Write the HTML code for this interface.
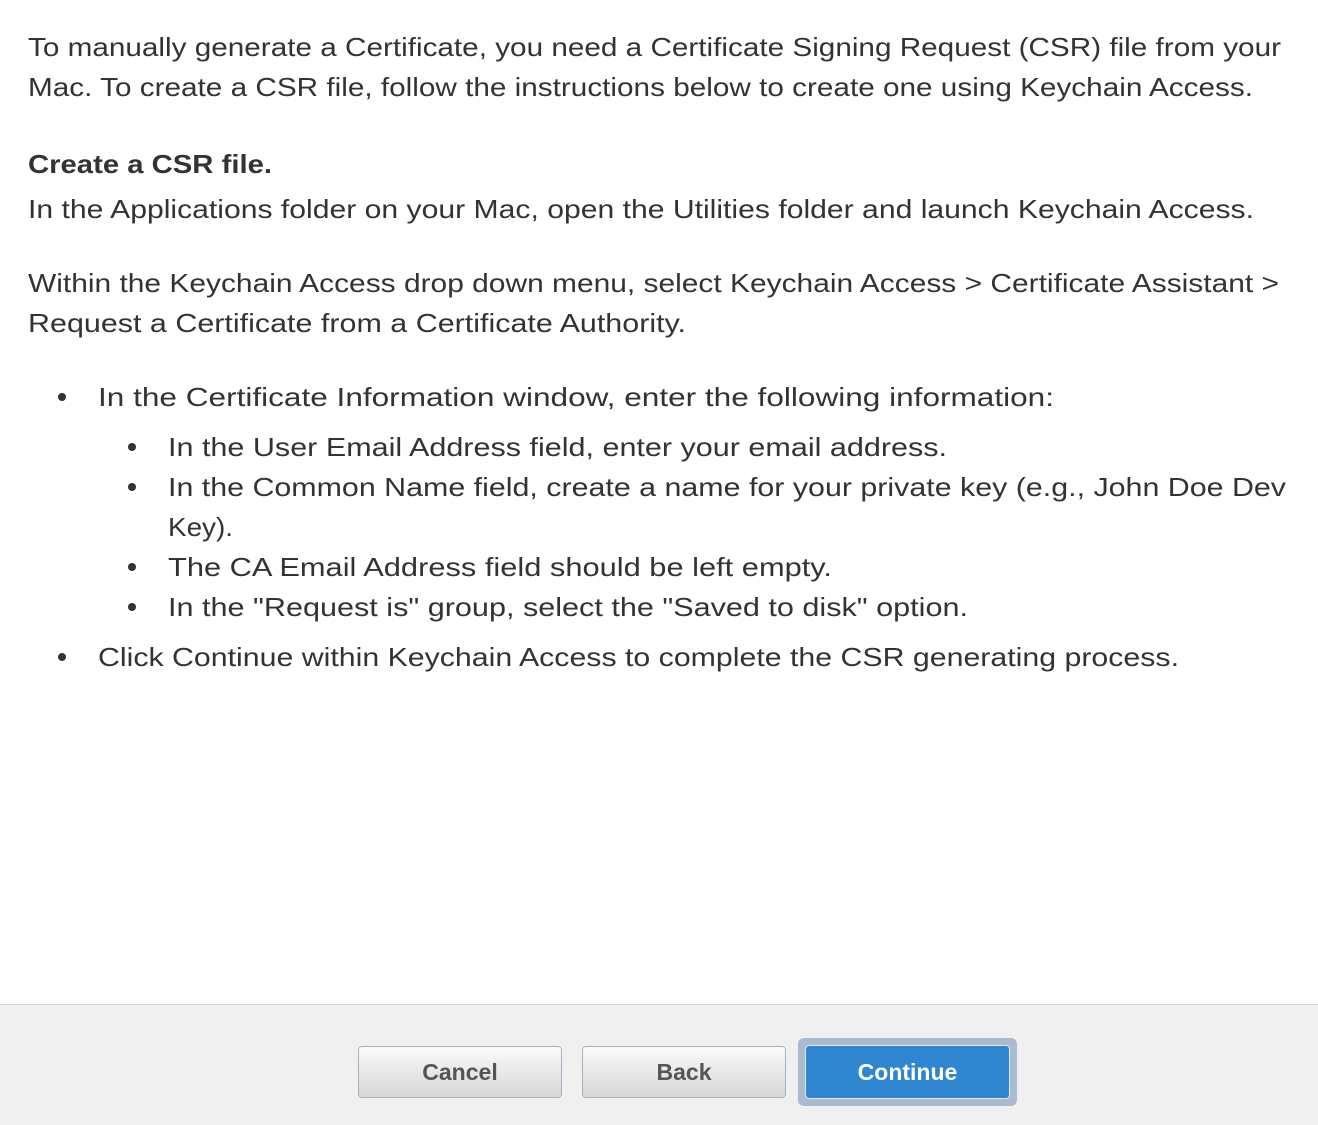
<!DOCTYPE html>
<html><head><meta charset="utf-8"><style>
html,body{margin:0;padding:0;width:1318px;height:1124px;overflow:hidden;background:#fff}
svg{position:absolute;left:0;top:0}
.t{font-family:"Liberation Sans",sans-serif;font-size:26px;fill:#333}
.b{font-weight:bold}
.footer{position:absolute;left:0;top:1004px;width:1318px;height:120px;background:#f0f0f0;border-top:1px solid #d6d6d6}
.btn{position:absolute;box-sizing:border-box;border:1px solid #9fb2c8;border-radius:4px;background:linear-gradient(#fbfbfb,#ececec 40%,#d6d6d6);font-family:"Liberation Sans",sans-serif;font-weight:bold;font-size:23px;color:#555;text-align:center}
</style></head><body>
<svg width="1318" height="1004" xmlns="http://www.w3.org/2000/svg">
<text class="t" x="28" y="56" textLength="1253" lengthAdjust="spacingAndGlyphs">To manually generate a Certificate, you need a Certificate Signing Request (CSR) file from your</text>
<text class="t" x="28" y="96" textLength="1225" lengthAdjust="spacingAndGlyphs">Mac. To create a CSR file, follow the instructions below to create one using Keychain Access.</text>
<text class="t b" x="28" y="173" textLength="244" lengthAdjust="spacingAndGlyphs">Create a CSR file.</text>
<text class="t" x="28" y="218" textLength="1226" lengthAdjust="spacingAndGlyphs">In the Applications folder on your Mac, open the Utilities folder and launch Keychain Access.</text>
<text class="t" x="28" y="292" textLength="1251" lengthAdjust="spacingAndGlyphs">Within the Keychain Access drop down menu, select Keychain Access &gt; Certificate Assistant &gt;</text>
<text class="t" x="28" y="332" textLength="658" lengthAdjust="spacingAndGlyphs">Request a Certificate from a Certificate Authority.</text>
<circle cx="62" cy="397" r="4" fill="#333"/>
<text class="t" x="98" y="406" textLength="956" lengthAdjust="spacingAndGlyphs">In the Certificate Information window, enter the following information:</text>
<circle cx="132" cy="447" r="4" fill="#333"/>
<text class="t" x="168" y="456" textLength="779" lengthAdjust="spacingAndGlyphs">In the User Email Address field, enter your email address.</text>
<circle cx="132" cy="487" r="4" fill="#333"/>
<text class="t" x="168" y="496" textLength="1118" lengthAdjust="spacingAndGlyphs">In the Common Name field, create a name for your private key (e.g., John Doe Dev</text>
<text class="t" x="168" y="536" textLength="65" lengthAdjust="spacingAndGlyphs">Key).</text>
<circle cx="132" cy="567" r="4" fill="#333"/>
<text class="t" x="168" y="576" textLength="664" lengthAdjust="spacingAndGlyphs">The CA Email Address field should be left empty.</text>
<circle cx="132" cy="607" r="4" fill="#333"/>
<text class="t" x="168" y="616" textLength="800" lengthAdjust="spacingAndGlyphs">In the "Request is" group, select the "Saved to disk" option.</text>
<circle cx="62" cy="657" r="4" fill="#333"/>
<text class="t" x="98" y="666" textLength="1081" lengthAdjust="spacingAndGlyphs">Click Continue within Keychain Access to complete the CSR generating process.</text>
</svg>
<div class="footer"></div>
<div class="btn" style="left:358px;top:1046px;width:204px;height:52px;line-height:50px">Cancel</div>
<div class="btn" style="left:582px;top:1046px;width:204px;height:52px;line-height:50px">Back</div>
<div style="position:absolute;left:798px;top:1038px;width:219px;height:68px;box-sizing:border-box;border-radius:6px;background:#aabbd0"></div>
<div class="btn" style="left:805px;top:1045px;width:205px;height:54px;line-height:52px;background:#2e86d0;border-color:#e0e8f0;color:#fff">Continue</div>
</body></html>
